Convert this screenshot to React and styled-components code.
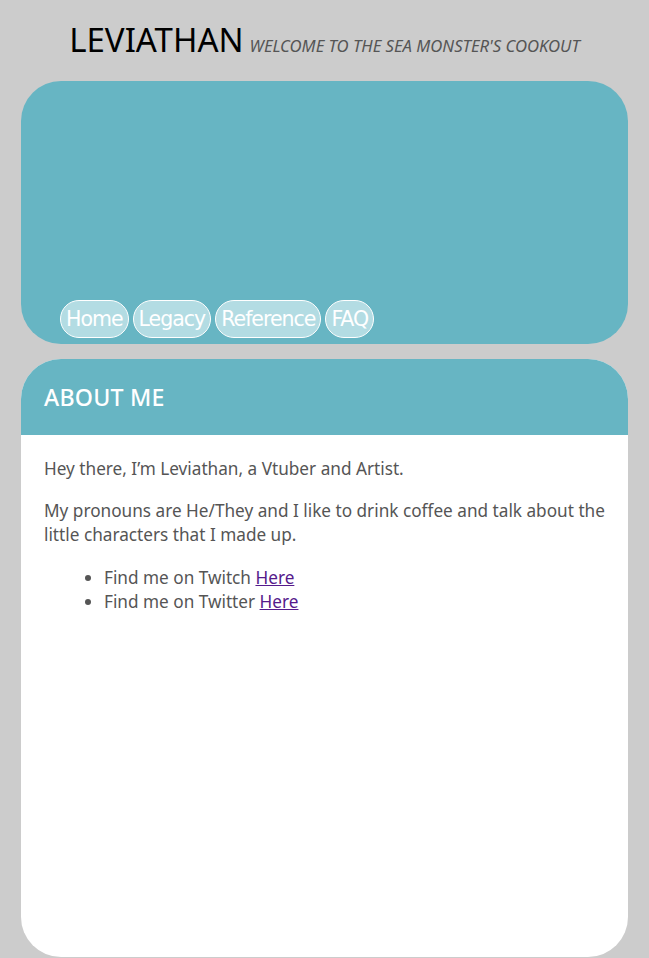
import React from "react";
import styled, { createGlobalStyle } from "styled-components";

const Global = createGlobalStyle`
  html, body { margin: 0; padding: 0; background: #cccccc; }
  body { font-family: "Noto Sans", "Open Sans", sans-serif; }
`;

const Page = styled.div`
  padding: 0 21px;
  display: flex;
  flex-direction: column;
`;

const Header = styled.header`
  display: flex;
  justify-content: center;
  align-items: baseline;
  gap: 6px;
  padding-top: 18px;
  height: 81px;
  box-sizing: border-box;
`;

const Title = styled.h1`
  margin: 0;
  font-family: "Noto Sans", sans-serif;
  font-weight: 400;
  font-size: 33px;
  line-height: 44px;
  color: #000;
`;

const Subtitle = styled.span`
  font-family: "Noto Sans", sans-serif;
  font-style: italic;
  font-size: 16.7px;
  color: #555;
  text-transform: uppercase;
`;

const Banner = styled.div`
  height: 263px;
  background: #67b5c3;
  border-radius: 40px;
  display: flex;
  align-items: flex-end;
  padding: 0 0 6px 39px;
  box-sizing: border-box;
`;

const Nav = styled.nav`
  display: flex;
  gap: 4px;
`;

const NavButton = styled.a`
  display: inline-flex;
  align-items: center;
  justify-content: center;
  height: 38px;
  box-sizing: border-box;
  padding: 0 5px;
  border: 1px solid #fff;
  border-radius: 19px;
  background: #b3dce3;
  color: #fff;
  font-family: "DejaVu Sans", Verdana, sans-serif;
  font-size: 20.5px;
  letter-spacing: -1px;
  text-decoration: none;
`;

const Card = styled.section`
  margin-top: 15px;
  height: 598px;
  background: #fff;
  border-radius: 40px;
  overflow: hidden;
  display: flex;
  flex-direction: column;
`;

const CardHeader = styled.div`
  height: 76px;
  background: #67b5c3;
  display: flex;
  align-items: center;
  padding: 0 23px;
`;

const CardTitle = styled.h2`
  margin: 0;
  font-family: "Noto Sans", sans-serif;
  font-weight: 500;
  font-size: 23.2px;
  color: #fff;
  letter-spacing: 0.2px;
`;

const CardBody = styled.div`
  padding: 22px 23px;
  color: #555;
  font-family: "Noto Sans", sans-serif;
  font-size: 17.2px;
  line-height: 24px;
`;

const Para = styled.p`
  margin: 0 0 18px;
`;

const List = styled.ul`
  margin: 19px 0 0;
  padding-left: 60px;
`;

const Link = styled.a`
  color: #551a8b;
  text-decoration: underline;
`;

export default function App() {
  return (
    <>
      <Global />
      <Page>
        <Header>
          <Title>LEVIATHAN</Title>
          <Subtitle>Welcome to the sea monster's cookout</Subtitle>
        </Header>
        <Banner>
          <Nav>
            <NavButton href="#">Home</NavButton>
            <NavButton href="#">Legacy</NavButton>
            <NavButton href="#">Reference</NavButton>
            <NavButton href="#">FAQ</NavButton>
          </Nav>
        </Banner>
        <Card>
          <CardHeader>
            <CardTitle>ABOUT ME</CardTitle>
          </CardHeader>
          <CardBody>
            <Para>Hey there, I’m Leviathan, a Vtuber and Artist.</Para>
            <Para>
              My pronouns are He/They and I like to drink coffee and talk about the little characters that I made up.
            </Para>
            <List>
              <li>Find me on Twitch <Link href="#">Here</Link></li>
              <li>Find me on Twitter <Link href="#">Here</Link></li>
            </List>
          </CardBody>
        </Card>
      </Page>
    </>
  );
}
